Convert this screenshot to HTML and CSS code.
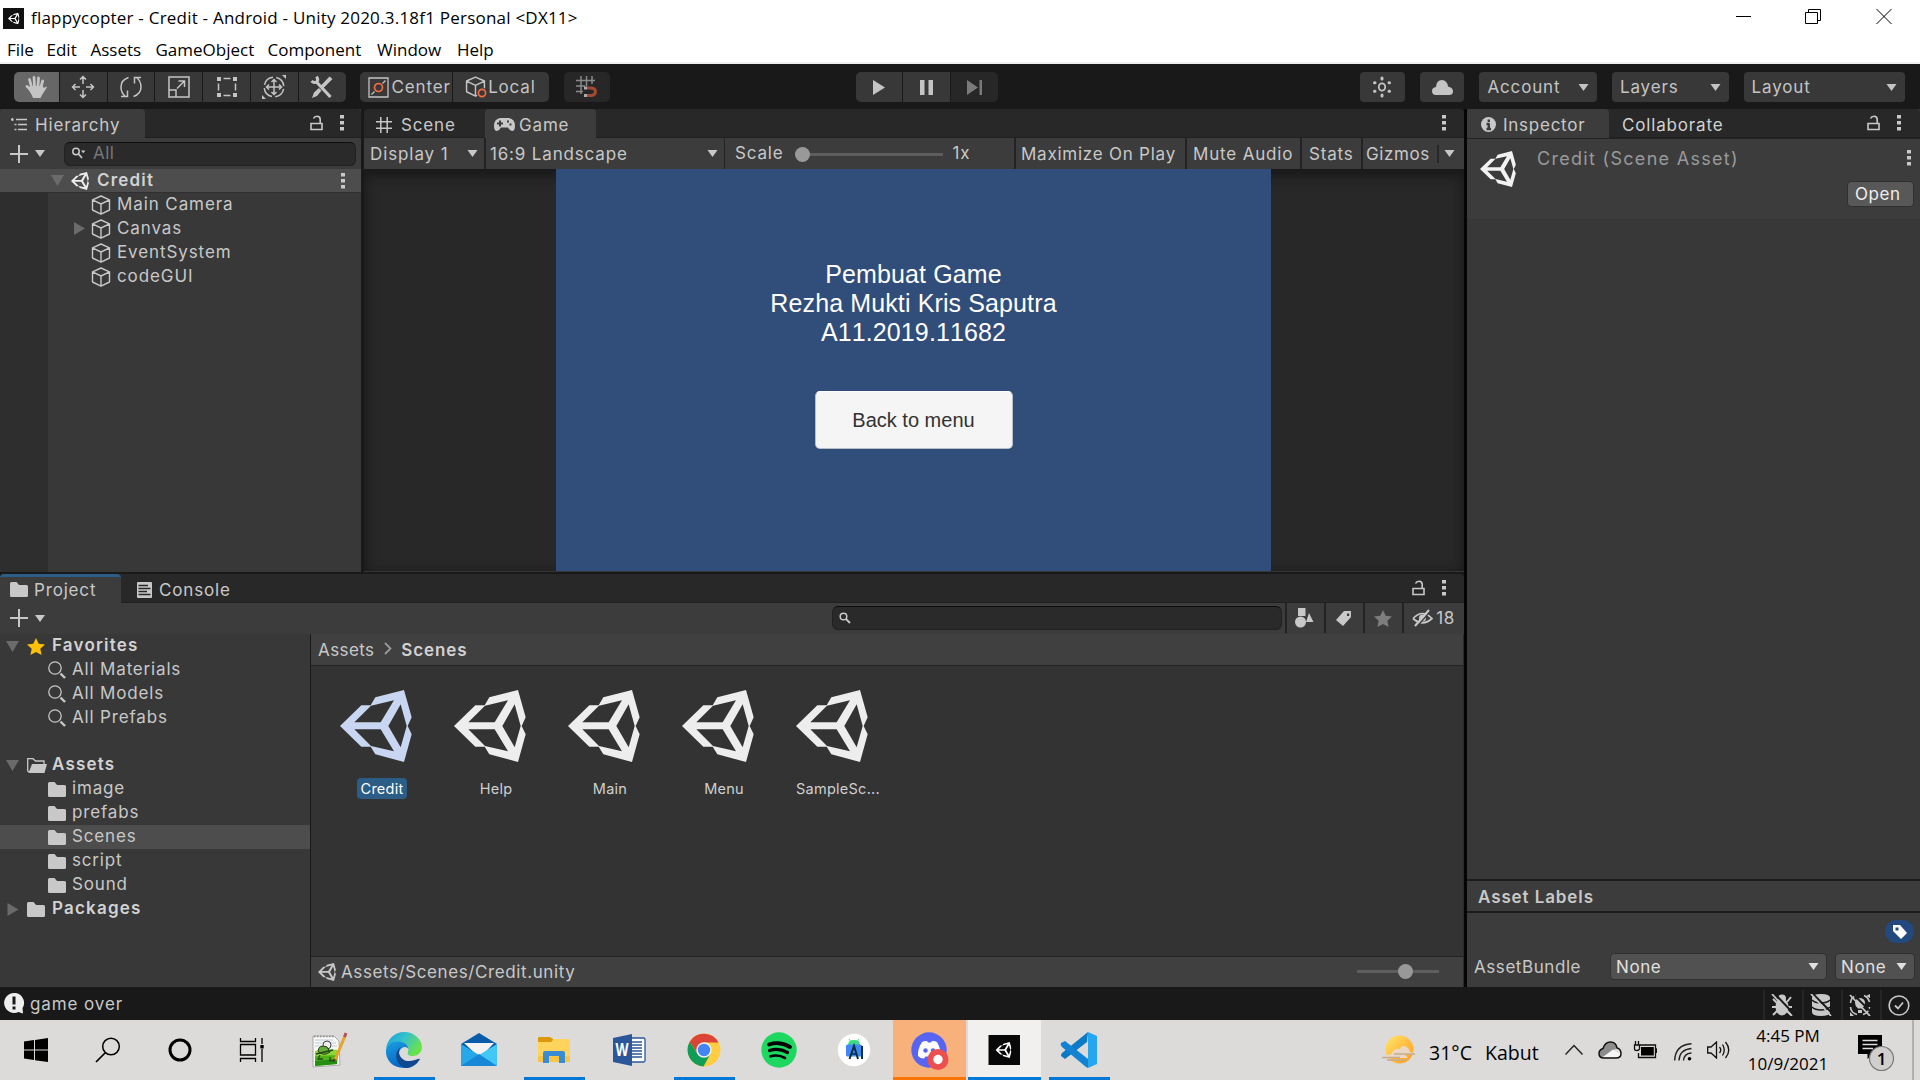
FILE: index.html
```html
<!DOCTYPE html>
<html lang="en">
<head>
<meta charset="utf-8">
<title>flappycopter - Unity</title>
<link rel="stylesheet" href="styles.css">
</head>
<body>
<svg class="sprite" aria-hidden="true">
  <symbol id="unity" viewBox="0 0 216 216"><path fill="currentColor" fill-rule="evenodd" d="M0 108 64 46H92L106 22 192 0 215 82 203 108 215 133 192 216 106 193 92 170H64ZM43 97H122L162 31 93 47ZM43 118 93 168 162 184 122 118ZM182 43 145 108 182 172 200 108Z"/></symbol>
  <symbol id="cube" viewBox="0 0 20 20"><path fill="none" stroke="currentColor" stroke-width="1.4" stroke-linejoin="round" d="M10 1 18.5 4.8V15L10 19.2 1.5 15V4.8ZM1.5 4.8 10 9 18.500 4.800M10 9V19"/></symbol>
  <symbol id="folder" viewBox="0 0 18 15"><path fill="currentColor" d="M0 1.500Q0 0 1.500 0H6.500L9 3H16.500Q18 3 18 4.500V13.500Q18 15 16.500 15H1.500Q0 15 0 13.500Z"/></symbol>
  <symbol id="lens" viewBox="0 0 18 18"><circle cx="7" cy="7" r="6.200" fill="none" stroke="currentColor" stroke-width="1.300"/><path stroke="currentColor" stroke-width="2.400" d="M12.500 12.500 17 17"/></symbol>
  <symbol id="lock" viewBox="0 0 13 16"><path fill="none" stroke="currentColor" stroke-width="1.600" d="M1 8.500H12V14.500H1ZM10.200 8.500V4.500Q10.200 1.200 7 1.200 4.500 1.200 3.500 3.500"/></symbol>
  <symbol id="dots" viewBox="0 0 4 16"><path fill="currentColor" d="M0 0H4V3.500H0ZM0 6H4V9.500H0ZM0 12H4V15.500H0Z"/></symbol>
  <symbol id="down" viewBox="0 0 10 7"><path fill="currentColor" d="M0 0H10L5 7Z"/></symbol>
  <symbol id="fold" viewBox="0 0 13 11"><path fill="currentColor" d="M0 0H13L6.500 11Z"/></symbol>
  <symbol id="unfold" viewBox="0 0 11 13"><path fill="currentColor" d="M0 0V13L11 6.500Z"/></symbol>
  <symbol id="plus" viewBox="0 0 18 18"><path stroke="currentColor" stroke-width="2" d="M9 0V18M0 9H18"/></symbol>
  <symbol id="star" viewBox="0 0 18 17"><path fill="currentColor" d="M9 0 11.700 5.700 18 6.500 13.300 10.800 14.600 17 9 13.900 3.400 17 4.700 10.800 0 6.500 6.300 5.700Z"/></symbol>
</svg>

<header class="titlebar">
  <svg class="app-icon" viewBox="0 0 21 21"><rect width="21" height="21" fill="#111"/><use href="#unity" x="5" y="4.500" width="11.500" height="12" color="#fff"/></svg>
  <span class="title">flappycopter - Credit - Android - Unity 2020.3.18f1 Personal &lt;DX11&gt;</span>
  <div class="win-controls">
    <svg viewBox="0 0 70 36"><path stroke="#000" d="M27 16.500H42"/></svg>
    <svg viewBox="0 0 70 36"><path fill="none" stroke="#000" d="M26.500 12.500H38.500V23.500H26.500ZM29.500 12.500V9.500H41.500V20.500H38.500"/></svg>
    <svg viewBox="0 0 70 36"><path stroke="#000" d="M27.500 9 42.500 24M42.500 9 27.500 24"/></svg>
  </div>
</header>
<nav class="menubar"><span>File</span><span>Edit</span><span>Assets</span><span>GameObject</span><span>Component</span><span>Window</span><span>Help</span></nav>

<div class="toolbar">
  <div class="group tools">
    <div class="btn on"><svg width="24" height="24" viewBox="0 0 24 24"><path fill="none" stroke="currentColor" stroke-width="2.800" stroke-linecap="round" d="M7.500 12 5.500 4.500M10.500 11 10 2.500M14 11 14.500 3M17 12 18.700 6M7 15 3 11.500"/><path fill="currentColor" d="M6 11H18.500L20 13 22 11.500Q23.500 11.500 22.500 13L18 20 16.500 23H9L7.500 19.500 4 14Z"/></svg></div>
    <div class="btn"><svg width="24" height="24" viewBox="0 0 24 24"><path fill="none" stroke="currentColor" stroke-width="1.500" d="M12 9V1.500M12 15V22.500M9 12H1.500M15 12H22.500M9 4.500 12 1.500 15 4.500M9 19.500 12 22.500 15 19.500M4.500 9 1.500 12 4.500 15M19.500 9 22.500 12 19.500 15"/></svg></div>
    <div class="btn"><svg width="24" height="24" viewBox="0 0 24 24"><path fill="none" stroke="currentColor" stroke-width="1.500" d="M9.500 2.500Q2 5 2 12 2 18 6.500 21.500M2 21.500H8.500V15.500M14.500 21.500Q22 19 22 12 22 6 17.500 2.500M22 2.500H15.500V8.500"/></svg></div>
    <div class="btn"><svg width="24" height="24" viewBox="0 0 24 24"><path fill="none" stroke="currentColor" stroke-width="1.500" d="M2 2H22V22H2ZM2 15H9V22M10 13.500 17 6.500M11.500 6H17.500V12"/></svg></div>
    <div class="btn"><svg width="24" height="24" viewBox="0 0 24 24"><path stroke="currentColor" stroke-width="1.500" d="M8.500 3.500H15.500M8.500 20.500H15.500M3.500 8.500V15.500M20.500 8.500V15.500"/><path fill="currentColor" d="M2 2H6V6H2ZM18 2H22V6H18ZM2 18H6V22H2ZM18 18H22V22H18Z"/></svg></div>
    <div class="btn"><svg width="26" height="24" viewBox="0 0 26 24"><circle cx="13" cy="12" r="9.800" fill="none" stroke="currentColor" stroke-width="1.500" stroke-dasharray="12 3.400" stroke-dashoffset="-2"/><path fill="none" stroke="currentColor" stroke-width="1.500" d="M13 5V19M6 12H20M10.500 7 13 4.500 15.500 7M10.500 17 13 19.500 15.500 17M8 9.500 5.500 12 8 14.500M18 9.500 20.500 12 18 14.500"/><path fill="currentColor" d="M21 0H25V4ZM1 20V24H5Z"/></svg></div>
    <div class="btn"><svg width="24" height="24" viewBox="0 0 24 24"><path fill="none" stroke="currentColor" stroke-width="3.200" d="M6.500 7 20.500 22"/><path fill="none" stroke="currentColor" stroke-width="3" d="M6.500 1.500Q9 5 6.500 7 4 8.500 1.500 6"/><path fill="currentColor" d="M19.500 1.500 22.500 4 13 13.500 10.500 11ZM9 13 11.500 15.500 7 21 2 23 4 17.500Z"/></svg></div>
  </div>
  <div class="group pivot">
    <div class="btn lab"><svg width="21" height="21" viewBox="0 0 21 21"><path fill="none" stroke="#c4c4c4" stroke-width="1.300" d="M1 1H20V20H1ZM3.500 17.500 6.500 14.500M14.500 6.500 17.500 3.500"/><circle cx="10.500" cy="10.500" r="4" fill="none" stroke="#f46b40" stroke-width="1.700"/></svg><span>Center</span></div>
    <div class="btn lab loc"><svg width="22" height="22" viewBox="0 0 22 22"><use href="#cube" width="21" height="21"/><circle cx="17" cy="17" r="5.500" fill="#383838"/><circle cx="17" cy="17" r="3.600" fill="none" stroke="#f46b40" stroke-width="1.700"/></svg><span>Local</span></div>
  </div>
  <div class="group snap">
    <div class="btn dim"><svg width="22" height="22" viewBox="0 0 22 22"><path fill="none" stroke="#8a8a8a" stroke-width="1.500" d="M5 0V18M10.500 0V10M16 0V8M0 4.500H19M0 10H9M0 15.500H7"/><path fill="none" stroke="#a04a32" stroke-width="3" d="M11 12H15.500Q19.500 12.500 19.500 15.500 19.500 19 15.500 19.500H11"/><path stroke="#aaa" stroke-width="3" d="M8 12H11M8 19.500H11"/></svg></div>
  </div>
  <div class="group play">
    <div class="btn"><svg width="12" height="15" viewBox="0 0 12 15"><path fill="currentColor" d="M0 0 12 7.500 0 15Z"/></svg></div>
    <div class="btn"><svg width="13" height="15" viewBox="0 0 13 15"><path fill="currentColor" d="M0 0H4.500V15H0ZM8.500 0H13V15H8.500Z"/></svg></div>
    <div class="btn dim"><svg width="15" height="15" viewBox="0 0 15 15"><path fill="#7a7a7a" d="M0 0 11 7.500 0 15ZM12.500 0H15V15H12.500Z"/></svg></div>
  </div>
  <div class="btn solo gear"><svg width="20" height="22" viewBox="0 0 20 22"><ellipse cx="10" cy="11" rx="3.200" ry="3.700" fill="none" stroke="currentColor" stroke-width="1.800"/><path fill="none" stroke="currentColor" stroke-width="3" stroke-linecap="round" d="M10 2V3M10 19V20M2.500 6.700H3M2.500 15.300H3M17 6.700H17.500M17 15.300H17.500"/></svg></div>
  <div class="btn solo"><svg width="21" height="15" viewBox="0 0 21 15"><path fill="currentColor" d="M4 15Q0 15 0 11 0 7.500 4 7 4.500 0 10 0 15 0 16 6.500 21 7.500 21 11.500 21 15 17 15Z"/></svg></div>
  <div class="drop account"><span>Account</span><svg width="11" height="7"><use href="#down"/></svg></div>
  <div class="drop layers"><span>Layers</span><svg width="11" height="7"><use href="#down"/></svg></div>
  <div class="drop layout"><span>Layout</span><svg width="11" height="7"><use href="#down"/></svg></div>
</div>

<main class="workspace">
  <div class="left">
    <div class="upper">
      <section class="hierarchy">
        <div class="tabs">
          <div class="tab active t-hier"><svg width="16" height="13" viewBox="0 0 16 13"><path stroke="currentColor" stroke-width="1.500" d="M5 1.500H16M7 6.500H16M7 11.500H16M0 1.500H2.500M3.500 6.500H5.500M3.500 11.500H5.500M1.500 0V3"/></svg><span>Hierarchy</span></div>
          <div class="tab-tools"><svg width="13" height="16"><use href="#lock"/></svg><svg width="4" height="16"><use href="#dots"/></svg></div>
        </div>
        <div class="bar">
          <div class="add"><svg width="18" height="18"><use href="#plus"/></svg><svg width="10" height="7"><use href="#down"/></svg></div>
          <div class="search"><svg width="14" height="12" viewBox="0 0 14 12"><circle cx="4" cy="4.500" r="3.200" fill="none" stroke="currentColor" stroke-width="1.500"/><path stroke="currentColor" stroke-width="1.800" d="M6.500 7 10 11"/><path fill="currentColor" d="M9 3.500H13.500L11.200 6.300Z"/></svg><span>All</span></div>
        </div>
        <div class="scene-row"><svg class="muted" width="13" height="11"><use href="#fold"/></svg><svg class="logo" width="18" height="18"><use href="#unity"/></svg><b>Credit</b><svg class="more" width="4" height="16"><use href="#dots"/></svg></div>
        <div class="objects">
          <div class="obj"><svg width="20" height="20"><use href="#cube"/></svg><span>Main Camera</span></div>
          <div class="obj open"><svg class="muted" width="11" height="13"><use href="#unfold"/></svg><svg width="20" height="20"><use href="#cube"/></svg><span>Canvas</span></div>
          <div class="obj"><svg width="20" height="20"><use href="#cube"/></svg><span>EventSystem</span></div>
          <div class="obj"><svg width="20" height="20"><use href="#cube"/></svg><span>codeGUI</span></div>
        </div>
      </section>
      <section class="game">
        <div class="tabs">
          <div class="tab t-scene"><svg width="16" height="16" viewBox="0 0 16 16"><path stroke="currentColor" stroke-width="1.500" d="M4.800 0V16M11.200 0V16M0 4.800H16M0 11.200H16"/></svg><span>Scene</span></div>
          <div class="tab active t-game"><svg width="21" height="13" viewBox="0 0 21 13"><path fill="currentColor" fill-rule="evenodd" d="M6 0H15Q21 1 21 8 21 13 18 13 16 13 14 9.500H7Q5 13 3 13 0 13 0 8 0 1 6 0ZM5 2.500V4.500H3V6.500H5V8.500H7V6.500H9V4.500H7V2.500ZM13 2.500V4.500H15V2.500ZM15.500 5.500V7.500H17.500V5.500Z"/></svg><span>Game</span></div>
          <div class="tab-tools"><svg width="4" height="16"><use href="#dots"/></svg></div>
        </div>
        <div class="bar gbar">
          <div class="g-display"><span>Display 1</span><svg width="11" height="7"><use href="#down"/></svg></div>
          <div class="g-aspect"><span>16:9 Landscape</span><svg width="11" height="7"><use href="#down"/></svg></div>
          <div class="g-scale"><span>Scale</span><div class="slider"><i></i></div><span>1x</span></div>
          <div class="g-max">Maximize On Play</div>
          <div class="g-mute">Mute Audio</div>
          <div class="g-stats">Stats</div>
          <div class="g-gizmos"><span>Gizmos</span><i></i><svg width="11" height="7"><use href="#down"/></svg></div>
        </div>
        <div class="viewport">
          <div class="screen">
            <p>Pembuat Game<br>Rezha Mukti Kris Saputra<br><span class="nim">A11.2019.11682</span></p>
            <div class="back">Back to menu</div>
          </div>
        </div>
      </section>
    </div>
    <section class="project">
      <div class="tabs">
        <div class="tab active t-proj"><svg width="18" height="15"><use href="#folder"/></svg><span>Project</span></div>
        <div class="tab t-cons"><svg width="15" height="16" viewBox="0 0 15 16"><rect width="15" height="16" rx="1" fill="currentColor"/><path stroke="#282828" stroke-width="1.400" d="M1.500 3.500H11M1.500 6.500H13.500M1.500 9.500H10M1.500 12.500H13.500"/></svg><span>Console</span></div>
        <div class="tab-tools"><svg width="13" height="16"><use href="#lock"/></svg><svg width="4" height="16"><use href="#dots"/></svg></div>
      </div>
      <div class="bar pbar">
        <div class="add"><svg width="18" height="18"><use href="#plus"/></svg><svg width="10" height="7"><use href="#down"/></svg></div>
        <div class="search"><svg width="12" height="12" viewBox="0 0 12 12"><circle cx="4.500" cy="4.500" r="3.300" fill="none" stroke="currentColor" stroke-width="1.500"/><path stroke="currentColor" stroke-width="1.800" d="M7 7 11 11"/></svg></div>
        <div class="filters">
          <div><svg width="19" height="20" viewBox="0 0 19 20"><path fill="currentColor" d="M3 0H10.500V8H3ZM14 5 18.500 14H11Z"/><circle cx="5.500" cy="14" r="5.500" fill="currentColor"/></svg></div>
          <div><svg width="16" height="15" viewBox="0 0 16 15"><path fill="currentColor" fill-rule="evenodd" d="M8 0H15V6L7 15 0 9ZM11 2.500V5H13.200V2.500Z"/></svg></div>
          <div><svg class="off" width="18" height="17"><use href="#star"/></svg></div>
          <div class="hidden-count"><svg width="21" height="18" viewBox="0 0 21 18"><path fill="none" stroke="currentColor" stroke-width="1.700" d="M1 9.500Q10.500-.5 20 9.500 10.500 18 1 9.500"/><circle cx="10.500" cy="9" r="3.500" fill="currentColor"/><path stroke="#3c3c3c" stroke-width="1.500" d="M5 17.500 19 1.500"/><path stroke="currentColor" stroke-width="2" d="M3 17 17 1"/></svg><span>18</span></div>
        </div>
      </div>
      <div class="project-body">
        <div class="tree">
          <div class="root"><svg class="muted" width="13" height="11"><use href="#fold"/></svg><svg class="fav" width="18" height="17"><use href="#star"/></svg><b>Favorites</b></div>
          <div class="leaf"><svg width="18" height="18"><use href="#lens"/></svg>All Materials</div>
          <div class="leaf"><svg width="18" height="18"><use href="#lens"/></svg>All Models</div>
          <div class="leaf"><svg width="18" height="18"><use href="#lens"/></svg>All Prefabs</div>
          <div class="root spaced"><svg class="muted" width="13" height="11"><use href="#fold"/></svg><svg class="folder-open" width="20" height="15" viewBox="0 0 20 15"><path fill="none" stroke="currentColor" stroke-width="1.300" d="M2 14 .7 13V.7H6L8.500 3H17V6"/><path fill="currentColor" d="M5 6H20L17.500 15H1.500Z"/></svg><b>Assets</b></div>
          <div class="leaf"><svg width="18" height="15"><use href="#folder"/></svg>image</div>
          <div class="leaf"><svg width="18" height="15"><use href="#folder"/></svg>prefabs</div>
          <div class="leaf selected"><svg width="18" height="15"><use href="#folder"/></svg>Scenes</div>
          <div class="leaf"><svg width="18" height="15"><use href="#folder"/></svg>script</div>
          <div class="leaf"><svg width="18" height="15"><use href="#folder"/></svg>Sound</div>
          <div class="root"><svg class="muted" width="13" height="13" viewBox="0 0 13 13"><path fill="currentColor" d="M1.500 0V13L12.500 6.500Z"/></svg><svg width="18" height="15"><use href="#folder"/></svg><b>Packages</b></div>
        </div>
        <div class="browser">
          <div class="crumbs"><span>Assets</span><svg width="8" height="13" viewBox="0 0 8 13"><path fill="none" stroke="#999" stroke-width="1.800" d="M1 1 6.500 6.500 1 12"/></svg><b>Scenes</b></div>
          <div class="assets">
            <div class="asset picked"><svg width="72" height="72"><use href="#unity"/></svg><span>Credit</span></div>
            <div class="asset"><svg width="72" height="72"><use href="#unity"/></svg><span>Help</span></div>
            <div class="asset"><svg width="72" height="72"><use href="#unity"/></svg><span>Main</span></div>
            <div class="asset"><svg width="72" height="72"><use href="#unity"/></svg><span>Menu</span></div>
            <div class="asset"><svg width="72" height="72"><use href="#unity"/></svg><span>SampleSc...</span></div>
          </div>
          <div class="path"><svg width="18" height="18"><use href="#unity"/></svg><span>Assets/Scenes/Credit.unity</span><div class="slider mid"><i></i></div></div>
        </div>
      </div>
    </section>
  </div>

  <section class="inspector">
    <div class="tabs">
      <div class="tab active t-insp"><svg width="15" height="15" viewBox="0 0 15 15"><circle cx="7.500" cy="7.500" r="7.500" fill="currentColor"/><path stroke="#3c3c3c" stroke-width="2.400" d="M7.800 2.500V5M7.800 6.300V12M5.500 7H8M5.500 12H10"/></svg><span>Inspector</span></div>
      <div class="tab t-coll"><span>Collaborate</span></div>
      <div class="tab-tools"><svg width="13" height="16"><use href="#lock"/></svg><svg width="4" height="16"><use href="#dots"/></svg></div>
    </div>
    <div class="asset-head">
      <svg class="big" width="36" height="36"><use href="#unity"/></svg>
      <span class="name">Credit (Scene Asset)</span>
      <div class="head-side"><svg width="4" height="16"><use href="#dots"/></svg><div class="open-btn">Open</div></div>
    </div>
    <div class="blank"></div>
    <div class="labels-title">Asset Labels</div>
    <div class="labels">
      <div class="tag"><svg width="14" height="14" viewBox="0 0 14 14"><path fill="#fff" fill-rule="evenodd" d="M0 0H7L14 8 8 14 0 6ZM2.500 2.500V5.500H5.500V2.500Z"/></svg></div>
      <div class="bundle"><span>AssetBundle</span><div class="select wide"><span>None</span><svg width="11" height="7"><use href="#down"/></svg></div><div class="select"><span>None</span><svg width="11" height="7"><use href="#down"/></svg></div></div>
    </div>
  </section>
</main>

<footer class="status">
  <svg width="20" height="21" viewBox="0 0 20 21"><path fill="#eee" d="M10 0A9.800 9.800 0 0 1 18.500 15L19 20.500 14.500 19A10 10 0 1 1 10 0Z"/><path stroke="#191919" stroke-width="3" d="M10 3.500V11.500M10 13.500V16.500"/></svg>
  <span>game over</span>
  <div class="status-icons">
    <div><svg width="22" height="22" viewBox="0 0 22 22"><ellipse cx="11" cy="13" rx="6.500" ry="8.500" fill="currentColor"/><circle cx="11" cy="4.500" r="4" fill="currentColor"/><path fill="none" stroke="currentColor" stroke-width="2" d="M2 5 6 9M20 3 16 8M1 13H21M2 21 7 16M20 21 15 16"/><path stroke="#191919" stroke-width="2" d="M4 0 22 19"/><path stroke="currentColor" stroke-width="1.800" d="M1 0 21 22"/></svg></div>
    <div><svg width="22" height="22" viewBox="0 0 22 22"><path fill="currentColor" d="M2 4Q2 0 11 0T20 4V18Q20 22 11 22T2 18Z"/><path fill="none" stroke="#191919" stroke-width="1.500" d="M2 6Q5 9 11 9T20 6M2 13Q5 16 11 16T20 13"/><path stroke="#191919" stroke-width="2" d="M3 0 22 19"/><path stroke="currentColor" stroke-width="1.800" d="M1 0 21 22"/></svg></div>
    <div><svg width="22" height="22" viewBox="0 0 22 22"><path fill="none" stroke="currentColor" stroke-width="1.600" d="M7 1.500Q1.500 4 1.500 9M15 1.500Q19 3 20.500 8M1.500 13Q2 19 8 20.500M20.500 13Q20 19 14 20.500"/><path fill="currentColor" d="M11 4Q16 4.500 16 9 16 12 13 14.500H9Q6 12 6 9 6 4.500 11 4ZM9 16H13V19H9ZM1 22V18L5 22ZM21 0V4L17 2Z"/><path stroke="#191919" stroke-width="2" d="M4 0 22 18"/><path stroke="currentColor" stroke-width="1.800" d="M1 1 21 22"/></svg></div>
    <div><svg width="22" height="21" viewBox="0 0 22 21"><ellipse cx="11" cy="10.500" rx="9.800" ry="9.500" fill="none" stroke="currentColor" stroke-width="1.600"/><path fill="none" stroke="currentColor" stroke-width="1.800" d="M7 10.500 10 13.500 15 7.500"/></svg></div>
  </div>
</footer>

<div class="taskbar">
  <div class="sys"><svg width="24" height="24" viewBox="0 0 24 24"><path d="M0 3.500 10 2V11.500H0ZM11 1.900 24 0V11.500H11ZM0 12.500H10V22L0 20.500ZM11 12.500H24V24L11 22.200Z"/></svg></div>
  <div class="sys"><svg width="26" height="26" viewBox="0 0 26 26"><circle cx="16" cy="9.500" r="8.300" fill="none" stroke="#000" stroke-width="1.500"/><path stroke="#000" stroke-width="1.700" d="M10.500 15.500 1 25"/></svg></div>
  <div class="sys"><svg width="24" height="24" viewBox="0 0 24 24"><circle cx="12" cy="12" r="10" fill="none" stroke="#000" stroke-width="3"/></svg></div>
  <div class="sys"><svg width="26" height="24" viewBox="0 0 26 24"><path fill="none" stroke="#000" stroke-width="1.300" d="M1.500 0V3.500H16.500V0M1.500 6.500H16.500V17H1.500ZM1.500 24V20.500H16.500V24M23 0V6M23 11V24"/><path d="M21.300 7H24.700V10.500H21.300Z"/></svg></div>
  <div class="apps">
    <div class="app"><svg viewBox="0 0 36 36"><path fill="#f7f7f5" stroke="#999" stroke-width=".8" d="M2 4H23L28 9 29 33 2 35Z"/><path fill="#8ed63a" d="M4 19Q15 16 27 18V26H4Z"/><path fill="#4fb316" d="M4 24 27 23 26 32 4 34Z"/><path fill="#238f10" d="M4 29 26 27V32L4 34Z"/><path stroke="#bcd" d="M4 8H22M4 11H25M4 14H26"/><path fill="none" stroke="#888" stroke-width="1.500" stroke-dasharray="1.500 1.500" d="M3 4.500H23"/><circle cx="16" cy="13" r="4" fill="#eee" stroke="#444"/><path fill="#64ae39" stroke="#253d17" d="M7 19Q8 12 16 15L19 20Q12 25 7 19Z"/><path fill="none" stroke="#24471b" stroke-width="1.300" d="M5 22 22 18M9 23 7 27H12M19 25V29L24 28"/><path stroke="#e8a42b" stroke-width="3" d="M24 28 34 4"/><path stroke="#b24f50" stroke-width="3" d="M33.500 5 35 1"/><path stroke="#513b24" stroke-width="1.500" d="M22.500 30 24 27"/></svg></div>
    <div class="app run"><svg viewBox="0 0 36 36"><defs><linearGradient id="e1" x1="0" y1="0" x2="1" y2=".5"><stop offset="0" stop-color="#159ed9"/><stop offset=".5" stop-color="#35c1cd"/><stop offset="1" stop-color="#6be24a"/></linearGradient><linearGradient id="e2" x1="0" y1="0" x2=".4" y2="1"><stop offset="0" stop-color="#1aa0e0"/><stop offset="1" stop-color="#0765c5"/></linearGradient></defs><path fill="url(#e1)" d="M0 17C1 7 9 0 18 0 29 0 36 8 36 15 36 21 31 24 27 24 22 24 21 22 22 20 24 13 19 10 13 10 6 10 1 14 0 17Z"/><path fill="url(#e2)" d="M0 18C1 12 7 9 13 9.500 18 10 22 12 22.500 17 20 13 14 15 13 21 12 29 19 33 25 35 10 39-1 30 0 18Z"/><path fill="#10488f" d="M15 15C10 20 15 30 24 29 29 29 33 26 34 27 31 33 25 36 20 36 8 33 8 19 15 15Z"/></svg></div>
    <div class="app"><svg viewBox="0 0 36 36"><path fill="#0a5cab" d="M0 12 18 1 36 12V20H0Z"/><path fill="#f3f3f3" d="M3 11H33L19 26Z"/><path fill="#27a8e8" d="M0 12 36 34H0Z"/><path fill="#43c7f6" d="M36 12V34L18 23Z"/><path fill="#1787d8" d="M0 34 18 22 36 34Z"/></svg></div>
    <div class="app run"><svg viewBox="0 0 36 36"><path fill="#dc9808" d="M2 6Q2 5 3 5H14L17 7V11H2Z"/><path fill="#ffd45c" d="M2 10H15L18 7H33Q34 7 34 8V30H2Z"/><path fill="#fbc544" d="M2 24H34V30H2Z"/><path fill="#388cd4" d="M7 21Q7 19 9 19H27Q29 19 29 21V31H23V24H13V31H7Z"/></svg></div>
    <div class="app"><svg viewBox="0 0 36 36"><rect x="17" y="6" width="17" height="24" rx="1.500" fill="#fff" stroke="#2b579a" stroke-width="1.300"/><path stroke="#2b579a" stroke-width="1.500" d="M19 10H31M19 13H31M19 16H31M19 19H31M19 22H31M19 25H31"/><path fill="#2b579a" d="M2 6 21 2V34L2 30Z"/><text class="word-w" x="4.500" y="24" textLength="13" lengthAdjust="spacingAndGlyphs">W</text></svg></div>
    <div class="app run"><svg viewBox="0 0 36 36"><circle cx="18" cy="18" r="16.500" fill="#ffcd40"/><path fill="#db4437" d="M18 10.500H32.500A16.500 16.500 0 0 0 3.700 9.800L11.500 21.500Z"/><path fill="#0f9d58" d="M3.700 9.800A16.500 16.500 0 0 0 17.500 34.500L24.500 21.800Q18 28 11.500 21.800Z"/><circle cx="18" cy="18" r="7.700" fill="#f1f1f1"/><circle cx="18" cy="18" r="6.200" fill="#4285f4"/></svg></div>
    <div class="app"><svg viewBox="0 0 36 36"><circle cx="18" cy="18" r="17.700" fill="#1ed760"/><path fill="none" stroke="#000" stroke-width="3.800" stroke-linecap="round" d="M8 12.500Q19 9 29 15"/><path fill="none" stroke="#000" stroke-width="3.200" stroke-linecap="round" d="M8.500 18.500Q18 15.500 26.500 20.500"/><path fill="none" stroke="#000" stroke-width="2.600" stroke-linecap="round" d="M9.500 24.300Q17 22 24 26"/></svg></div>
    <div class="app"><svg viewBox="0 0 36 36"><circle cx="18" cy="18" r="16.200" fill="#fff"/><path fill="#3ddc84" d="M12 13Q12 8 18 8T24 13Z"/><path stroke="#3ddc84" d="M13 7 15 10M23 7 21 10"/><rect x="10" y="12.500" width="16" height="12" rx="1.500" fill="#4285f4"/><path fill="none" stroke="#073042" stroke-width="2" d="M13.500 27 18 14 22 27M26 14V27"/><path stroke="#073042" stroke-width="1.500" d="M15.500 22H20.500"/></svg></div>
    <div class="app wide alert"><svg viewBox="0 0 36 36"><circle cx="18" cy="18" r="17.700" fill="#5865f2"/><path fill="#fff" d="M11 10Q14 8.500 16 9L17 10.500H20L21 9Q23 8.500 26 10 30 17 29.500 24 27 26.500 24 26.500L22.500 24.500H14.500L13 26.500Q9 26.500 7 24 6.500 17 11 10Z"/><circle cx="14.500" cy="18.500" r="2.200" fill="#5865f2"/><circle cx="22" cy="18.500" r="2.200" fill="#5865f2"/><circle cx="27" cy="27.500" r="10.500" fill="#ed4f4f"/><circle cx="27" cy="27.500" r="4.700" fill="#fff"/></svg></div>
    <div class="app wide current"><svg viewBox="0 0 36 36"><rect x="2.500" y="3" width="31.500" height="30" fill="#080808"/><use href="#unity" x="9.500" y="9.500" width="16" height="17" color="#fff"/></svg></div>
    <div class="app run"><svg viewBox="0 0 36 36"><path fill="#0b79c4" d="M27 0 26 10 4 27 0 24Q0 22 1 21Z"/><path fill="#1183d2" d="M4 9 27 27V36L25 35 1 15Q-1 12 0 11Z"/><path fill="#25a7f0" d="M27 0 36 4V32L27 36Z"/></svg></div>
  </div>
  <div class="tray">
    <svg class="weather" viewBox="0 0 34 30"><defs><linearGradient id="sun" x1="0" y1="0" x2="1" y2="1"><stop offset=".2" stop-color="#ffd75a"/><stop offset="1" stop-color="#ff9a1e"/></linearGradient></defs><circle cx="17.500" cy="14.500" r="14" fill="url(#sun)"/><path fill="#e9d8c4" d="M4 20Q10 20 11 16 14 13 18 14 19 10 24 11.500 27 13 28 17 34 18 33 19.500H22Q27 22 25 23H3Q1 22 4 20Z"/><path stroke="#c3aa91" stroke-width="1.300" d="M0 22.500H18M5 25H24M12 19H33"/></svg>
    <span class="temp">31°C</span><span class="cond">Kabut</span>
    <svg class="chev" viewBox="0 0 18 12"><path fill="none" stroke="#222" stroke-width="1.500" d="M.5 10.500 9 1.500 17.500 10.500"/></svg>
    <svg class="onedrive" viewBox="0 0 24 18"><path fill="#8c8c8c" d="M5 16Q1 16 1 12 1 8 5 7.500 7 1 13 1 18 1 19 7L8 14Z"/><path fill="#f5f5f5" d="M5 16 15 8.500 23 13Q22 16.500 19 16.500Z"/><path fill="none" stroke="#111" stroke-width="1.500" d="M6 17Q1 17 1 12.500 1 9 5 7.500 7 1 12.500 1 18 1 19 7 23 8 23 12.500 23 17 18 17Z"/></svg>
    <svg class="battery" viewBox="0 0 24 18"><path fill="none" stroke="#111" stroke-width="1.300" d="M7 4H22.500V16.500H5.500V12M22.500 8H23.500V12"/><path d="M8 6H20.800V14.500H8Z"/><path fill="#dddbd9" stroke="#111" stroke-width="1.300" d="M1.500 4H6.500V8Q6 9.500 4 9.500 1.500 9.500 1.500 8ZM2.500 0V4M5.500 0V4"/></svg>
    <svg class="wifi" viewBox="0 0 18 18"><path fill="none" stroke="#222" stroke-width="1.400" d="M.7 17.500Q1 2 17.500 .7M5 17.500Q5.500 6.500 17.500 5.500M9.500 17.500Q10 10.500 17.500 10"/><circle cx="15.500" cy="15.800" r="1.800"/></svg>
    <svg class="sound" viewBox="0 0 23 18"><path fill="none" stroke="#111" stroke-width="1.300" d="M.7 6H4L9.500 1V17L4 12H.7ZM12.500 6Q15 9 12.500 12M15.500 3.500Q19 9 15.500 14.500M18.500 1Q25 9 18.500 17"/></svg>
    <div class="clock">4:45 PM<br>10/9/2021</div>
    <svg class="notif" viewBox="0 0 36 38"><path d="M0 0H24V19H14.500L9.500 24V19H0Z"/><path stroke="#ddd" stroke-width="1.600" d="M4.500 5.500H19.500M4.500 9.500H19.500M4.500 13.500H15"/><circle cx="23.500" cy="23.500" r="12" fill="#d0cfce" stroke="#777" stroke-width="1.200"/><text class="badge-n" x="23.500" y="30" text-anchor="middle">1</text></svg>
    <i class="edge"></i>
  </div>
</div>
</body>
</html>
```
FILE: styles.css
```css
* { box-sizing: border-box; }
body {
  margin: 0; width: 1920px; height: 1080px; overflow: hidden;
  display: flex; flex-direction: column;
  font: 17px/24px Inter, "Open Sans", sans-serif; letter-spacing: .83px;
  color: #c8c8c8; background: #191919; white-space: nowrap;
}
.sprite { display: none; }
svg { display: block; flex: none; }
b { font-weight: 600; letter-spacing: 1.2px; color: #d2d2d2; }
.muted { color: #6b6b6b; }

/* window frame */
.titlebar, .menubar { background: #fff; color: #000; font-family: "Open Sans", sans-serif; letter-spacing: 0; flex: none; }
.titlebar { height: 36px; display: flex; align-items: center; padding-left: 3px; }
.app-icon { width: 21px; height: 21px; margin-right: 7px; }
.title { letter-spacing: .22px; }
.win-controls { display: flex; margin-left: auto; margin-right: 1px; }
.win-controls svg { width: 70px; height: 36px; }
.menubar {
  height: 28px; padding-left: 7px; border-bottom: 2px solid #f0f0f0; line-height: 27px;
  display: grid; grid-template-columns: 39.5px 44px 65px 112px 109.500px 80px auto;
}

/* main toolbar */
.toolbar { height: 45px; padding: 8px 0 0 14px; display: flex; align-items: flex-start; flex: none; color: #c4c4c4; }
.group { display: flex; gap: 1px; border-radius: 5px; overflow: hidden; }
.btn { width: 47px; height: 30px; background: #383838; display: flex; align-items: center; justify-content: center; }
.btn.on { width: 45px; background: #676767; }
.btn.dim { background: #272727; }
.pivot { margin-left: 14px; }
.lab { width: 93px; justify-content: flex-start; padding-left: 8px; gap: 3px; }
.lab.loc { width: 96px; padding-left: 12px; gap: 1px; }
.snap { margin-left: 15px; }
.snap .btn { width: 46px; }
.play { margin-left: 246px; }
.solo { width: 45px; border-radius: 4px; margin-right: 15px; }
.gear { margin-left: 362px; }
.drop { height: 30px; border-radius: 4px; background: #383838; display: flex; align-items: center; justify-content: space-between; padding: 0 8px; margin-right: 15px; }
.account { width: 118px; }
.layers { width: 117px; }
.layout { width: 162px; }

/* dock layout */
.workspace { height: 878px; flex: none; display: flex; background: #191919; }
.left { width: 1464px; display: flex; flex-direction: column; }
.upper { height: 463px; display: flex; gap: 3px; }
.hierarchy { width: 361px; background: #383838; display: flex; flex-direction: column; }
.game { width: 1100px; display: flex; flex-direction: column; }
.tabs { height: 29px; flex: none; display: flex; background: #282828; border-radius: 4px 4px 0 0; }
.tab { display: flex; align-items: center; padding-top: 2px; border-radius: 4px 4px 0 0; }
.tab.active { background: #3c3c3c; }
.tab:not(.active) { padding-top: 3px; }
.tab:not(.active), .tab-tools { border-bottom: 1px solid #202020; }
.tab-tools { flex: 1; display: flex; align-items: center; justify-content: flex-end; gap: 17px; padding: 0 17px 0 0; }
.t-hier { width: 145px; padding-left: 11px; gap: 8px; }
.t-scene { width: 121px; padding-left: 12px; gap: 9px; }
.t-game { width: 111px; padding-left: 9px; gap: 4px; }
.game .tab-tools { padding-right: 18px; }
.bar { height: 31px; flex: none; display: flex; align-items: center; background: #3c3c3c; }
.add { display: flex; align-items: center; gap: 7px; padding-left: 10px; }
.search { height: 24px; background: #2a2a2a; border: 1px solid #212121; border-top-color: #0d0d0d; border-radius: 6px; display: flex; align-items: center; }
.hierarchy .search { width: 292px; margin-left: 19px; padding: 0 0 1px 7px; gap: 7px; letter-spacing: .5px; }
.hierarchy .search span { color: #777; }
.scene-row { height: 23px; flex: none; display: flex; align-items: center; background: #4d4d4d; padding: 0 16px 2px 51px; }
.scene-row .logo { margin: 2px 8px 0 7px; color: #eee; }
.scene-row .muted, .scene-row .more { margin-top: 2px; }
.scene-row .more { margin-left: auto; }
.objects { flex: 1; border-left: 48px solid #2e2e2e; border-top: 1px solid #303030; }
.obj { height: 24px; display: flex; align-items: center; gap: 6px; padding: 0 0 2px 43px; letter-spacing: .9px; }
.obj svg:not(.muted) { margin-top: 2px; }
.obj.open { padding-left: 26px; }

/* game view */
.gbar { gap: 2px; background: #232323; align-items: stretch; }
.gbar > div { background: #3c3c3c; display: flex; align-items: center; }
.g-display { width: 120px; justify-content: space-between; padding: 0 6px 0 6px; letter-spacing: .9px; }
.g-aspect { width: 238px; justify-content: space-between; padding: 0 6px 0 4px; margin-right: -1px; }
.g-scale { width: 289px; padding-left: 10px; }
.g-max { width: 169px; padding-left: 5px; letter-spacing: .76px; }
.g-mute { width: 113px; padding-left: 6px; }
.g-stats { width: 59px; padding-left: 7px; letter-spacing: .8px; }
.g-gizmos { flex: 1; padding-left: 3px; letter-spacing: .6px; }
.g-gizmos i { width: 2px; height: 18px; background: #282828; margin: 0 5px 0 7px; }
.slider { display: flex; align-items: center; height: 15px; flex: none; }
.slider::before { content: ""; width: 148px; height: 3px; background: #5e5e5e; flex: none; }
.slider i { width: 15px; height: 15px; flex: none; border-radius: 50%; background: #999; margin-left: -148px; margin-right: 133px; }
.g-scale .slider { margin: 1px 10px 0 11px; }
.g-scale > span { margin-top: -1px; }
.viewport { flex: 1; display: flex; justify-content: center; background: #282828; box-shadow: inset 0 8px 14px -2px #191919, inset 0 0 10px #1e1e1e; border-bottom: 1px solid #353535; }
.screen { width: 715px; margin-right: 1px; background: #314d79; color: #fff; display: flex; flex-direction: column; align-items: center; font-family: "Liberation Sans", sans-serif; letter-spacing: 0; }
.screen p { margin: 91px 0 44px; font-size: 25px; line-height: 29px; text-align: center; letter-spacing: .12px; }
.nim { font-kerning: none; }
.back { width: 198px; height: 58px; border-radius: 5px; background: #f5f5f5; color: #323232; border: 1px solid #b8bec8; border-top-color: #fff; font-size: 20px; line-height: 57px; text-align: center; }

/* project */
.project { height: 413px; margin-top: 2px; display: flex; flex-direction: column; }
.t-proj.tab { width: 121px; padding: 0 0 1px 10px; gap: 6px; border-top: 3px solid #2c5d87; }
.t-cons { padding-left: 16px; gap: 7px; }
.project .tab-tools { padding-right: 18px; gap: 17px; }
.pbar { height: 31px; padding-bottom: 1px; }
.pbar .search { width: 450px; margin-left: 787px; padding-left: 6px; }
.filters { margin-left: 3px; height: 30px; display: flex; flex: 1; gap: 2px; background: #232323; padding-left: 2px; }
.filters > div { width: 37px; background: #3c3c3c; display: flex; align-items: center; justify-content: center; padding-right: 2px; }
.filters .hidden-count { width: auto; flex: 1; gap: 3px; letter-spacing: .6px; padding: 0 1px 0 0; }
.off { color: #7d7d7d; }
.project-body { flex: 1; display: flex; min-height: 0; }
.tree { width: 310px; background: #383838; }
.root, .leaf { height: 24px; display: flex; align-items: center; padding: 0 0 2px 6px; }
.root svg { margin-top: 3px; }
.root svg:nth-child(2) { margin: 3px 7px 0 8px; }
.root svg.folder-open { margin-right: 5px; }
.root .fav { color: #ffc107; }
.leaf { padding-left: 48px; gap: 6px; }
.leaf svg { margin-top: 2px; }
.spaced { margin-top: 23px; }
.selected { background: #4d4d4d; }
.browser { flex: 1; margin-left: 1px; display: flex; flex-direction: column; background: #333; border-right: 1px solid #2a2a2a; }
.crumbs { height: 32px; border-bottom: 1px solid #232323; background: #404040; display: flex; align-items: center; padding-left: 7px; letter-spacing: .4px; }
.crumbs svg { margin: 0 9px 3px 10px; }
.crumbs b { letter-spacing: .9px; }
.assets { flex: 1; display: flex; padding: 24px 0 0 14px; }
.asset { width: 114px; display: flex; flex-direction: column; align-items: center; color: #ededed; }
.asset svg { margin-right: 13px; }
.asset span { margin-top: 16px; height: 21px; padding: 0 4px; border-radius: 4px; font-size: 14.500px; line-height: 21px; letter-spacing: .25px; color: #cfcfcf; }
.asset.picked { color: #c9d6f2; }
.asset.picked span { background: #2c5d87; color: #fff; }
.path { height: 31px; border-top: 1px solid #232323; background: #404040; display: flex; align-items: center; padding-left: 7px; gap: 5px; letter-spacing: .6px; }
.mid { margin: 0 24px 1px auto; }
.mid::before { width: 82px; }
.mid i { margin-left: -41px; margin-right: 26px; }

/* inspector */
.inspector { flex: 1; border-left: 3px solid #050505; display: flex; flex-direction: column; background: #383838; }
.t-insp { width: 142px; padding-left: 14px; gap: 7px; letter-spacing: .75px; }
.t-coll { padding-left: 13px; color: #d2d2d2; }
.inspector .tab-tools { padding-right: 19px; }
.asset-head { height: 81px; border-top: 1px solid #232323; background: #3c3c3c; display: flex; padding: 12px 6px 0 13px; }
.asset-head .big { color: #f2f2f2; }
.name { margin: -4px 0 0 21px; font-size: 18px; letter-spacing: 1.300px; color: #9a9a9a; }
.head-side { margin-left: auto; display: flex; flex-direction: column; align-items: flex-end; }
.head-side svg { margin: -1px 3px 0 0; }
.open-btn { width: 67px; height: 26px; margin-top: 15px; border-radius: 4px; background: #585858; border: 1px solid #303030; color: #eee; line-height: 25px; padding-left: 7px; letter-spacing: .6px; }
.blank { flex: 1; }
.labels-title { height: 34px; border: solid #1c1c1c; border-width: 2px 0; background: #3c3c3c; padding-left: 11px; line-height: 32px; font-weight: 600; color: #c8c8c8; letter-spacing: .9px; }
.labels { height: 74px; background: #3c3c3c; padding: 7px 5px 0 7px; }
.tag { width: 29px; height: 23px; border-radius: 12px; margin-left: auto; margin-right: 1px; background: #24497f; display: flex; align-items: center; justify-content: center; }
.bundle { display: flex; margin-top: 10px; align-items: center; letter-spacing: .57px; }
.bundle > span { width: 136px; }
.select { width: 80px; height: 27px; border: 1px solid #303030; border-radius: 4px; background: #515151; color: #e0e0e0; display: flex; align-items: center; justify-content: space-between; padding: 0 7px 0 5px; }
.select.wide { width: 217px; margin-right: 8px; }

/* status bar */
.status { height: 33px; flex: none; display: flex; align-items: center; padding-left: 4px; }
.status > span { margin-left: 6px; letter-spacing: .9px; }
.status-icons { display: flex; margin-left: auto; height: 30px; align-self: flex-end; padding-right: 1px; }
.status-icons div { width: 39px; border-left: 2px solid #262626; display: flex; align-items: center; justify-content: center; padding-right: 3px; }

/* taskbar */
.taskbar { height: 60px; flex: none; display: flex; background: #dddbd9; color: #000; font-family: "Open Sans", sans-serif; letter-spacing: 0; }
.sys { width: 72px; display: flex; align-items: center; justify-content: center; }
.apps { display: flex; margin-left: 3px; }
.app { width: 75px; display: flex; justify-content: center; padding-top: 12px; }
.app svg { width: 36px; height: 36px; overflow: visible; }
.run { background: linear-gradient(#0078d7, #0078d7) 8px bottom / 61px 3px no-repeat; }
.wide.app { width: 73px; margin: 0 0 0 2px; padding-right: 2px; }
.alert { background: #f8b17a; border-bottom: 3px solid #ff7400; }
.current { background: #f1f0ef; border-bottom: 3px solid #0078d7; }
.word-w { font: bold 17px "Open Sans", sans-serif; fill: #fff; }
.tray { flex: 1; display: flex; align-items: center; }
.weather { width: 34px; height: 30px; margin-left: 266px; }
.temp, .cond { font-size: 19.500px; margin-top: 5px; }
.temp { margin-left: 13px; width: 56px; }
.cond { width: 80px; }
.chev { width: 18px; height: 12px; margin-right: 15px; }
.onedrive { width: 24px; height: 18px; margin-right: 11px; }
.battery { width: 24px; height: 18px; margin-right: 17px; }
.wifi { width: 18px; height: 18px; margin: 3px 15px 0 0; }
.sound { width: 23px; height: 18px; }
.clock { width: 114px; text-align: center; line-height: 28px; padding-left: 2px; }
.notif { width: 36px; height: 38px; margin: 8px 0 0 14px; }
.badge-n { font: 600 17px "Open Sans", sans-serif; fill: #000; }
.edge { width: 2px; height: 60px; margin-left: 18px; background: #b3b1b0; }
```
